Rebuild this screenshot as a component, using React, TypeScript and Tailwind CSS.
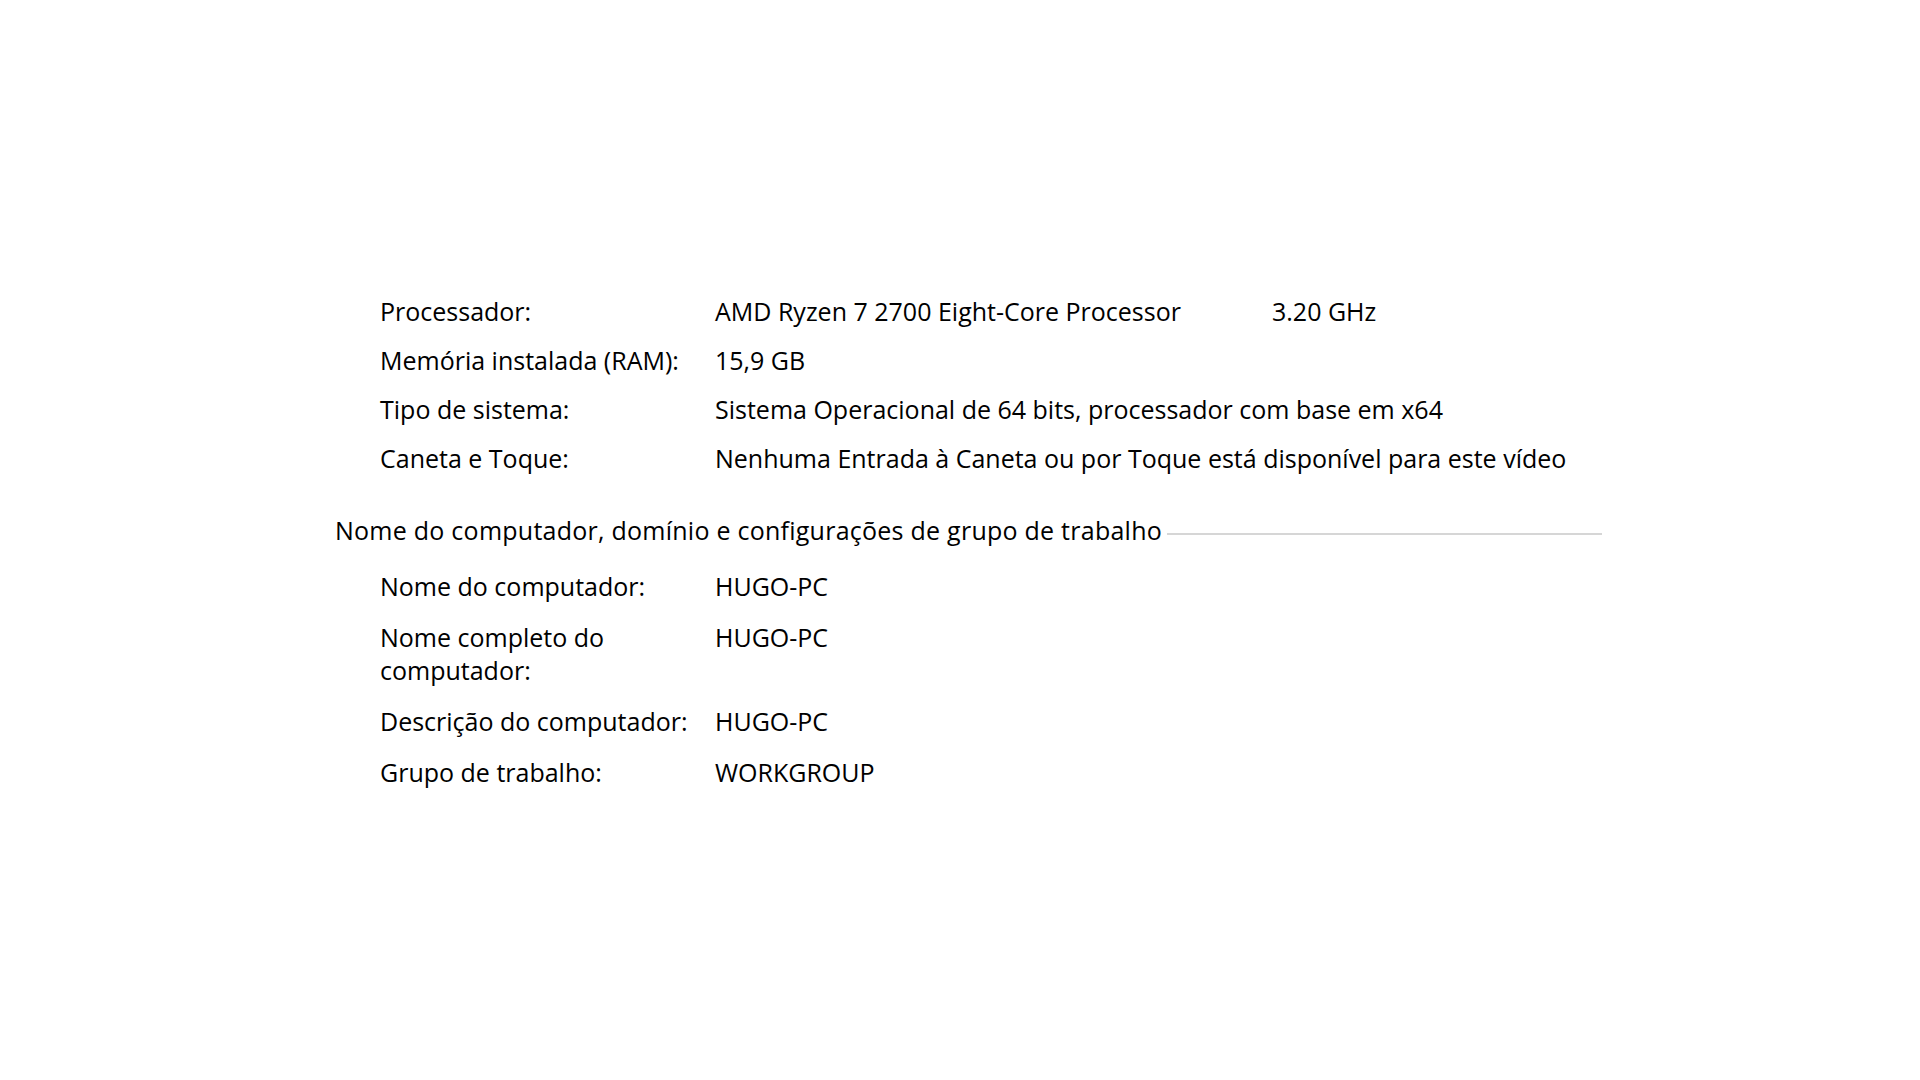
export default function App() {
  const hardware = [
    { label: 'Processador:', value: 'AMD Ryzen 7 2700 Eight-Core Processor', extra: '3.20 GHz' },
    { label: 'Memória instalada (RAM):', value: '15,9 GB' },
    { label: 'Tipo de sistema:', value: 'Sistema Operacional de 64 bits, processador com base em x64' },
    { label: 'Caneta e Toque:', value: 'Nenhuma Entrada à Caneta ou por Toque está disponível para este vídeo' },
  ];

  const computer = [
    { label: 'Nome do computador:', value: 'HUGO-PC' },
    { label: 'Nome completo do computador:', value: 'HUGO-PC' },
    { label: 'Descrição do computador:', value: 'HUGO-PC' },
    { label: 'Grupo de trabalho:', value: 'WORKGROUP' },
  ];

  return (
    <div
      className="w-[1920px] h-[1080px] bg-white text-black text-[25px] leading-[33px] pt-[295px] pl-[335px]"
      style={{ fontFamily: '"Open Sans", "Noto Sans", sans-serif' }}
    >
      {/* hardware rows */}
      <div className="flex flex-col gap-[16px] pl-[45px]">
        {hardware.map((row) => (
          <div key={row.label} className="flex">
            <div className="w-[335px] shrink-0 pr-[15px]">{row.label}</div>
            <div className="flex whitespace-nowrap">
              <span className={row.extra ? 'w-[557px]' : ''}>{row.value}</span>
              {row.extra && <span>{row.extra}</span>}
            </div>
          </div>
        ))}
      </div>

      {/* section header */}
      <div className="flex items-center w-[1267px] mt-[39px]">
        <span className="whitespace-nowrap tracking-[0.25px]">
          Nome do computador, domínio e configurações de grupo de trabalho
        </span>
        <div className="flex-1 h-[2px] bg-[#d6d6d6] ml-[5px] mt-[6px]" />
      </div>

      {/* computer rows */}
      <div className="flex flex-col gap-[18px] pl-[45px] mt-[23px]">
        {computer.map((row) => (
          <div key={row.label} className="flex">
            <div className="w-[335px] shrink-0 pr-[15px]">{row.label}</div>
            <div>{row.value}</div>
          </div>
        ))}
      </div>
    </div>
  );
}
